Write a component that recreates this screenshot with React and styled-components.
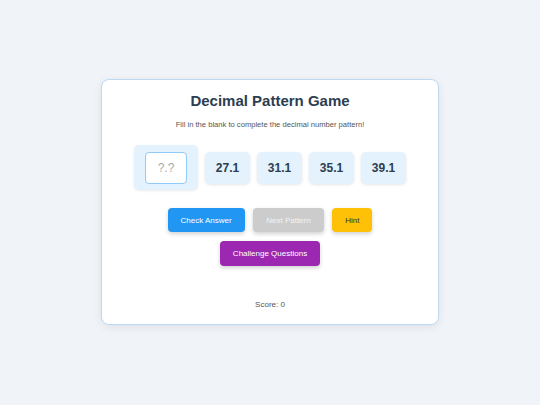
import React from "react";
import styled, { createGlobalStyle } from "styled-components";

const Global = createGlobalStyle`
  html, body { margin: 0; padding: 0; background: #f0f4f8; }
  body { font-family: "Liberation Sans", Arial, sans-serif; }
  * { box-sizing: border-box; }
`;

const Page = styled.div`
  width: 540px;
  height: 405px;
  display: flex;
  justify-content: center;
  align-items: flex-start;
  padding-top: 79px;
  background: #f0f4f8;
`;

const Card = styled.div`
  width: 338px;
  background: #ffffff;
  border: 1px solid #bcd9ef;
  border-radius: 8px;
  box-shadow: 0 2px 8px rgba(0, 0, 0, 0.08);
  padding: 12px 16px 14px;
  display: flex;
  flex-direction: column;
  align-items: center;
`;

const Title = styled.h1`
  margin: 0;
  font-size: 15px;
  line-height: 18px;
  font-weight: 700;
  color: #2c3e50;
`;

const Subtitle = styled.p`
  margin: 10px 0 0;
  font-size: 7.6px;
  line-height: 10px;
  color: #555;
`;

const Pattern = styled.div`
  margin-top: 15px;
  display: flex;
  align-items: center;
  gap: 7px;
`;

const Slot = styled.div`
  width: 64px;
  height: 45px;
  background: #e3f2fd;
  border-radius: 5px;
  box-shadow: 0 1px 3px rgba(0, 0, 0, 0.08);
  display: flex;
  align-items: center;
  justify-content: center;
`;

const Input = styled.input`
  width: 42px;
  height: 32px;
  border: 1px solid #90caf9;
  border-radius: 4px;
  background: #fff;
  text-align: center;
  font-family: "Liberation Sans", Arial, sans-serif;
  font-size: 12px;
  color: #2c3e50;
  outline: none;
  padding: 0;
  &::placeholder { color: #aaa; }
`;

const NumBox = styled.div`
  width: 45px;
  height: 32px;
  background: #e3f2fd;
  border-radius: 5px;
  box-shadow: 0 1px 3px rgba(0, 0, 0, 0.1);
  display: flex;
  align-items: center;
  justify-content: center;
  font-size: 12px;
  font-weight: 700;
  color: #2c3e50;
`;

const ButtonRow = styled.div`
  margin-top: ${(p) => p.$mt}px;
  display: flex;
  justify-content: center;
  gap: 8.5px;
`;

const Button = styled.button`
  height: ${(p) => p.$h || 24}px;
  padding: 0 13px;
  border: none;
  border-radius: 4px;
  background: ${(p) => p.$bg};
  color: ${(p) => p.$fg || "#fff"};
  font-family: "Liberation Sans", Arial, sans-serif;
  font-size: 8px;
  box-shadow: 0 2px 4px rgba(0, 0, 0, 0.18);
  cursor: pointer;
`;

const Score = styled.div`
  margin-top: 34px;
  font-size: 8px;
  line-height: 10px;
  color: #555;
`;

export default function App() {
  return (
    <Page>
      <Global />
      <Card>
        <Title>Decimal Pattern Game</Title>
        <Subtitle>Fill in the blank to complete the decimal number pattern!</Subtitle>
        <Pattern>
          <Slot>
            <Input placeholder="?.?" />
          </Slot>
          {["27.1", "31.1", "35.1", "39.1"].map((n) => (
            <NumBox key={n}>{n}</NumBox>
          ))}
        </Pattern>
        <ButtonRow $mt={18}>
          <Button $bg="#2196f3">Check Answer</Button>
          <Button $bg="#cccccc" $fg="#f4f4f4">Next Pattern</Button>
          <Button $bg="#ffc107" $fg="#333">Hint</Button>
        </ButtonRow>
        <ButtonRow $mt={9}>
          <Button $bg="#9c27b0" $h={25}>Challenge Questions</Button>
        </ButtonRow>
        <Score>Score: 0</Score>
      </Card>
    </Page>
  );
}
